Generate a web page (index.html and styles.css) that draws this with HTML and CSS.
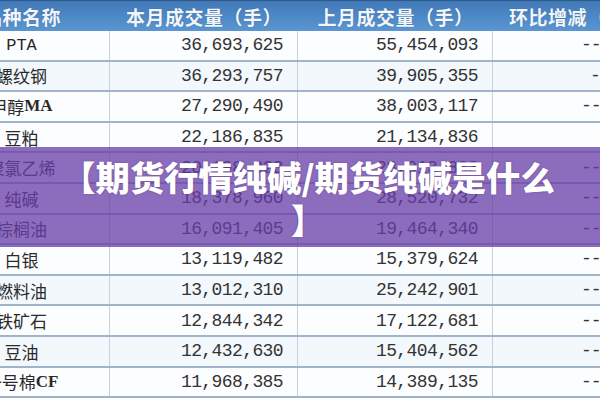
FILE: index.html
```html
<!DOCTYPE html>
<html lang="zh">
<head>
<meta charset="utf-8">
<title>期货行情纯碱</title>
<link rel="stylesheet" href="styles.css">
</head>
<body>
<div class="sheet">
  <div class="table">
    <div class="row head">
      <div class="cell name">品种名称</div>
      <div class="cell">本月成交量（手）</div>
      <div class="cell">上月成交量（手）</div>
      <div class="cell chg">环比增减（%）</div>
    </div>
    <div class="row"><div class="cell name lat">PTA</div><div class="cell num">36,693,625</div><div class="cell num">55,454,093</div><div class="cell pct">--</div></div>
    <div class="row tint"><div class="cell name">螺纹钢</div><div class="cell num">36,293,757</div><div class="cell num">39,905,355</div><div class="cell pct short">-</div></div>
    <div class="row"><div class="cell name">甲醇<b class="ser">MA</b></div><div class="cell num">27,290,490</div><div class="cell num">38,003,117</div><div class="cell pct">--</div></div>
    <div class="row"><div class="cell name">豆粕</div><div class="cell num">22,186,835</div><div class="cell num">21,134,836</div><div class="cell pct"></div></div>
    <div class="row"><div class="cell name">聚氯乙烯</div><div class="cell num">20,198,823</div><div class="cell num">28,913,833</div><div class="cell pct">--</div></div>
    <div class="row"><div class="cell name">纯碱</div><div class="cell num">18,378,960</div><div class="cell num">28,520,732</div><div class="cell pct">--</div></div>
    <div class="row"><div class="cell name">棕榈油</div><div class="cell num">16,091,405</div><div class="cell num">19,464,340</div><div class="cell pct">--</div></div>
    <div class="row"><div class="cell name">白银</div><div class="cell num">13,119,482</div><div class="cell num">15,379,624</div><div class="cell pct">--</div></div>
    <div class="row tint"><div class="cell name">燃料油</div><div class="cell num">13,012,310</div><div class="cell num">25,242,901</div><div class="cell pct">--</div></div>
    <div class="row"><div class="cell name">铁矿石</div><div class="cell num">12,844,342</div><div class="cell num">17,122,681</div><div class="cell pct">--</div></div>
    <div class="row tint"><div class="cell name">豆油</div><div class="cell num">12,432,630</div><div class="cell num">15,404,562</div><div class="cell pct">--</div></div>
    <div class="row"><div class="cell name">一号棉<b class="ser">CF</b></div><div class="cell num">11,968,385</div><div class="cell num">14,389,135</div><div class="cell pct">--</div></div>
  </div>
  <div class="banner">
    <p class="title">【期货行情纯碱/期货纯碱是什么】</p>
  </div>
</div>
</body>
</html>
```
FILE: styles.css
```css
html, body {
  margin: 0;
  padding: 0;
  width: 600px;
  height: 400px;
  overflow: hidden;
  background: #ffffff;
}

.sheet {
  position: relative;
  width: 600px;
  height: 400px;
  overflow: hidden;
}

.table {
  display: flex;
  flex-direction: column;
  margin-left: -66px;
  width: 730px;
}

.row {
  display: grid;
  grid-template-columns: 176px 188px 195px 171px;
  height: 30.6px;
  box-sizing: border-box;
  border-bottom: 2px solid #9fb4c9;
  background: #fcfdfe;
}

.row.tint {
  background: #f2f8fb;
}

.row.head {
  height: 31px;
  border-top: 1px solid #2c5a8c;
  border-bottom: none;
  background: linear-gradient(#4278b6, #4f8bc9 60%, #5b96d1);
}

.cell {
  display: flex;
  align-items: center;
  box-sizing: border-box;
  border-right: 1.5px solid #c9d0d7;
  color: #2a2a2a;
  font-family: "Noto Sans CJK SC", sans-serif;
  font-size: 17px;
  white-space: nowrap;
  overflow: hidden;
}

.head .cell {
  justify-content: center;
  border-right: none;
  color: #f2f6fb;
  font-weight: 700;
  font-size: 19px;
  letter-spacing: 0.5px;
  text-shadow: 0 0 1px rgba(30, 60, 100, 0.5);
}

.head .chg {
  justify-content: flex-start;
  padding-left: 16px;
}

.name {
  justify-content: center;
}

.lat {
  font-family: "Liberation Mono", monospace;
  font-size: 17px;
}

.ser {
  font-family: "Liberation Serif", serif;
  font-weight: 700;
  font-size: 17px;
}

.num {
  justify-content: flex-end;
  padding-right: 14px;
  font-family: "Liberation Mono", monospace;
  font-size: 18px;
  letter-spacing: -0.6px;
  color: #333333;
}

.pct {
  padding-left: 88px;
  font-family: "Liberation Mono", monospace;
  font-size: 18px;
  letter-spacing: -1px;
  color: #333333;
  border-right: none;
}

.pct.short {
  padding-left: 97px;
}

.banner {
  position: absolute;
  left: 0;
  top: 147px;
  width: 600px;
  height: 100px;
  box-sizing: border-box;
  padding-top: 8px;
  background: rgba(104, 62, 168, 0.76);
}

.title {
  margin: 0 0 0 58px;
  width: 500px;
  text-align: center;
  color: #ffffff;
  font-family: "Noto Sans CJK SC", sans-serif;
  font-weight: 900;
  font-size: 34.3px;
  line-height: 43px;
  line-break: anywhere;
  text-shadow: 0 0 2px rgba(40, 20, 70, 0.35);
}
```
